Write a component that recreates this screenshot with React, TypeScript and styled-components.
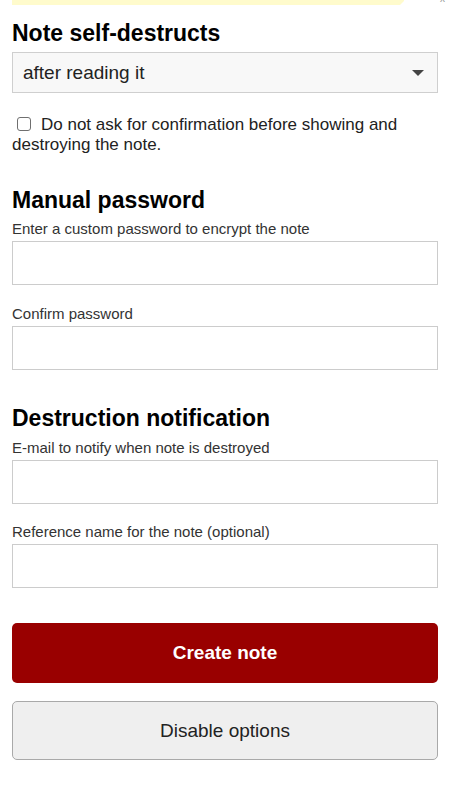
import React from "react";
import styled, { createGlobalStyle } from "styled-components";

const GlobalStyle = createGlobalStyle`
  html, body {
    margin: 0;
    padding: 0;
    background: #fff;
    font-family: "Liberation Sans", Arial, sans-serif;
    color: #222;
  }
  * { box-sizing: border-box; }
`;

const Page = styled.div`
  padding: 0 12px 40px;
`;

const NoticeBar = styled.div`
  position: relative;
  display: flex;
  align-items: flex-start;
  height: 6px;
  margin-bottom: 14px;
`;

const NoticeStrip = styled.div`
  flex: 1;
  height: 5px;
  margin-right: 34px;
  background: #fffbcc;
  position: relative;
  &::after {
    content: "";
    position: absolute;
    right: 0;
    bottom: 0;
    border-style: solid;
    border-width: 0 0 4px 4px;
    border-color: transparent transparent #fff transparent;
  }
`;

const Close = styled.span`
  position: absolute;
  right: -7px;
  top: -6px;
  font-size: 10px;
  line-height: 10px;
  color: #999;
`;

const Heading = styled.h2<{ $top?: number }>`
  margin: ${(p) => p.$top ?? 0}px 0 0;
  font-size: 23px;
  line-height: 26px;
  font-weight: bold;
  color: #000;
`;

const SelectBox = styled.div`
  margin-top: 6px;
  height: 41px;
  display: flex;
  align-items: center;
  justify-content: space-between;
  padding: 0 13px 0 10px;
  border: 1px solid #cfcfcf;
  background: #f8f8f8;
  font-size: 19px;
  color: #222;
`;

const Caret = styled.span`
  width: 0;
  height: 0;
  border-left: 6px solid transparent;
  border-right: 6px solid transparent;
  border-top: 6px solid #444;
`;

const CheckRow = styled.label`
  display: block;
  margin-top: 22px;
  font-size: 17px;
  line-height: 20px;
  color: #222;
`;

const Box = styled.span`
  display: inline-block;
  width: 14px;
  height: 14px;
  margin: 0 10px 0 5px;
  border: 1px solid #6f6f6f;
  border-radius: 3px;
  vertical-align: -1px;
  background: #fff;
`;

const Label = styled.div<{ $top?: number }>`
  margin-top: ${(p) => p.$top ?? 0}px;
  font-size: 15px;
  line-height: 18px;
  color: #333;
`;

const Field = styled.div`
  margin-top: 3px;
  height: 44px;
  border: 1px solid #cccccc;
  background: #fff;
`;

const Button = styled.div<{ $primary?: boolean; $top: number }>`
  margin-top: ${(p) => p.$top}px;
  height: ${(p) => (p.$primary ? 60 : 59)}px;
  display: flex;
  align-items: center;
  justify-content: center;
  border-radius: 5px;
  font-size: 19px;
  font-weight: ${(p) => (p.$primary ? "bold" : "normal")};
  color: ${(p) => (p.$primary ? "#fff" : "#222")};
  background: ${(p) => (p.$primary ? "#990000" : "#efefef")};
  border: ${(p) => (p.$primary ? "none" : "1px solid #a9a9a9")};
`;

export default function App() {
  return (
    <>
      <GlobalStyle />
      <Page>
        <NoticeBar>
          <NoticeStrip />
          <Close>x</Close>
        </NoticeBar>
        <Heading>Note self-destructs</Heading>
        <SelectBox>
          <span>after reading it</span>
          <Caret />
        </SelectBox>
        <CheckRow>
          <Box />
          Do not ask for confirmation before showing and destroying the note.
        </CheckRow>

        <Heading $top={32}>Manual password</Heading>
        <Label $top={7}>Enter a custom password to encrypt the note</Label>
        <Field />
        <Label $top={20}>Confirm password</Label>
        <Field />

        <Heading $top={35}>Destruction notification</Heading>
        <Label $top={8}>E-mail to notify when note is destroyed</Label>
        <Field />
        <Label $top={19}>Reference name for the note (optional)</Label>
        <Field />

        <Button $primary $top={35}>Create note</Button>
        <Button $top={18}>Disable options</Button>
      </Page>
    </>
  );
}
